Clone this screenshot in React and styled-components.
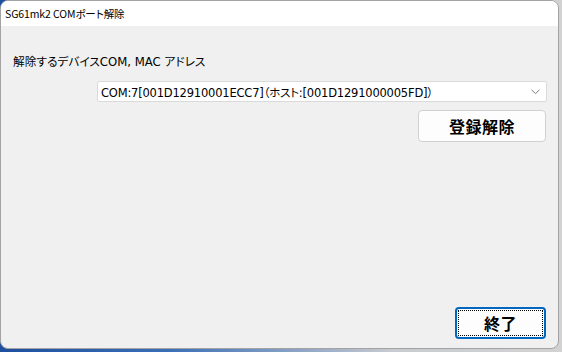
import React from 'react';
import styled, { createGlobalStyle } from 'styled-components';

const Global = createGlobalStyle`
html, body {
    margin: 0;
    padding: 0;
    width: 562px;
    height: 352px;
    overflow: hidden;
    background: linear-gradient(90deg, #1d4f9e 0%, #3a6fb8 30%, #c9cbd0 70%, #d2d2d2 100%);
}
* {
    box-sizing: border-box;
}
`;

const App = () => {
    return (
        <>
            <Global />
            <Window>
                <TitleBar>SG61mk2 COMポート解除</TitleBar>
                <Body>
                    <Label>解除するデバイスCOM, MAC アドレス</Label>
                    <Combo>
                        <ComboText>COM:7[001D12910001ECC7]（ホスト:[001D1291000005FD]）</ComboText>
                        <Chevron width="9" height="6" viewBox="0 0 9 6">
                            <path d="M0.5 0.8 L4.5 4.6 L8.5 0.8" fill="none" stroke="#7a7a7a" strokeWidth="1" />
                        </Chevron>
                    </Combo>
                    <Button>登録解除</Button>
                    <Spacer />
                    <Button $focused $width={91}>終了</Button>
                </Body>
            </Window>
        </>
    );
};

//CSS ------------------------------------------------------------------

const Window = styled.div`
width: 559px;
height: 349px;
display: flex;
flex-direction: column;
background: #f0f0f0;
border: 1px solid #a3a3a3;
border-radius: 8px;
overflow: hidden;
font-family: "DejaVu Sans", "Noto Sans CJK JP", sans-serif;
font-feature-settings: "palt";
color: #000;
`;

const TitleBar = styled.div`
height: 25px;
flex: none;
background: #fff;
padding-left: 4px;
display: flex;
align-items: center;
font-family: "Noto Sans CJK JP", sans-serif;
font-size: 10.5px;
letter-spacing: -0.1px;
`;

const Body = styled.div`
flex: 1;
display: flex;
flex-direction: column;
padding: 28px 11px 9px 12px;
`;

const Label = styled.div`
font-size: 11.7px;
line-height: 16px;
`;

const Combo = styled.div`
margin-top: 11px;
margin-left: 84px;
height: 21px;
display: flex;
align-items: center;
justify-content: space-between;
background: #fff;
border: 1px solid #dadada;
border-radius: 2px;
padding: 0 6px 0 3px;
`;

const ComboText = styled.span`
font-size: 11.5px;
letter-spacing: -0.2px;
white-space: nowrap;
`;

const Chevron = styled.svg`
flex: none;
`;

const Button = styled.button`
align-self: flex-end;
margin-right: 1px;
margin-top: 8px;
width: ${p => p.$width || 128}px;
height: 32px;
display: flex;
align-items: center;
justify-content: center;
background: #fdfdfd;
border: ${p => p.$focused ? '2px solid #0067c0' : '1px solid #d0d0d0'};
border-radius: 4px;
font-family: "Noto Sans CJK JP", sans-serif;
font-size: 16px;
font-weight: 700;
letter-spacing: 0.5px;
color: #000;
position: relative;
padding: 0;
${p => p.$focused && `
&::after {
    content: '';
    position: absolute;
    inset: 1px;
    border: 1px dotted #000;
}
`}
`;

const Spacer = styled.div`
flex: 1;
`;

export default App;
